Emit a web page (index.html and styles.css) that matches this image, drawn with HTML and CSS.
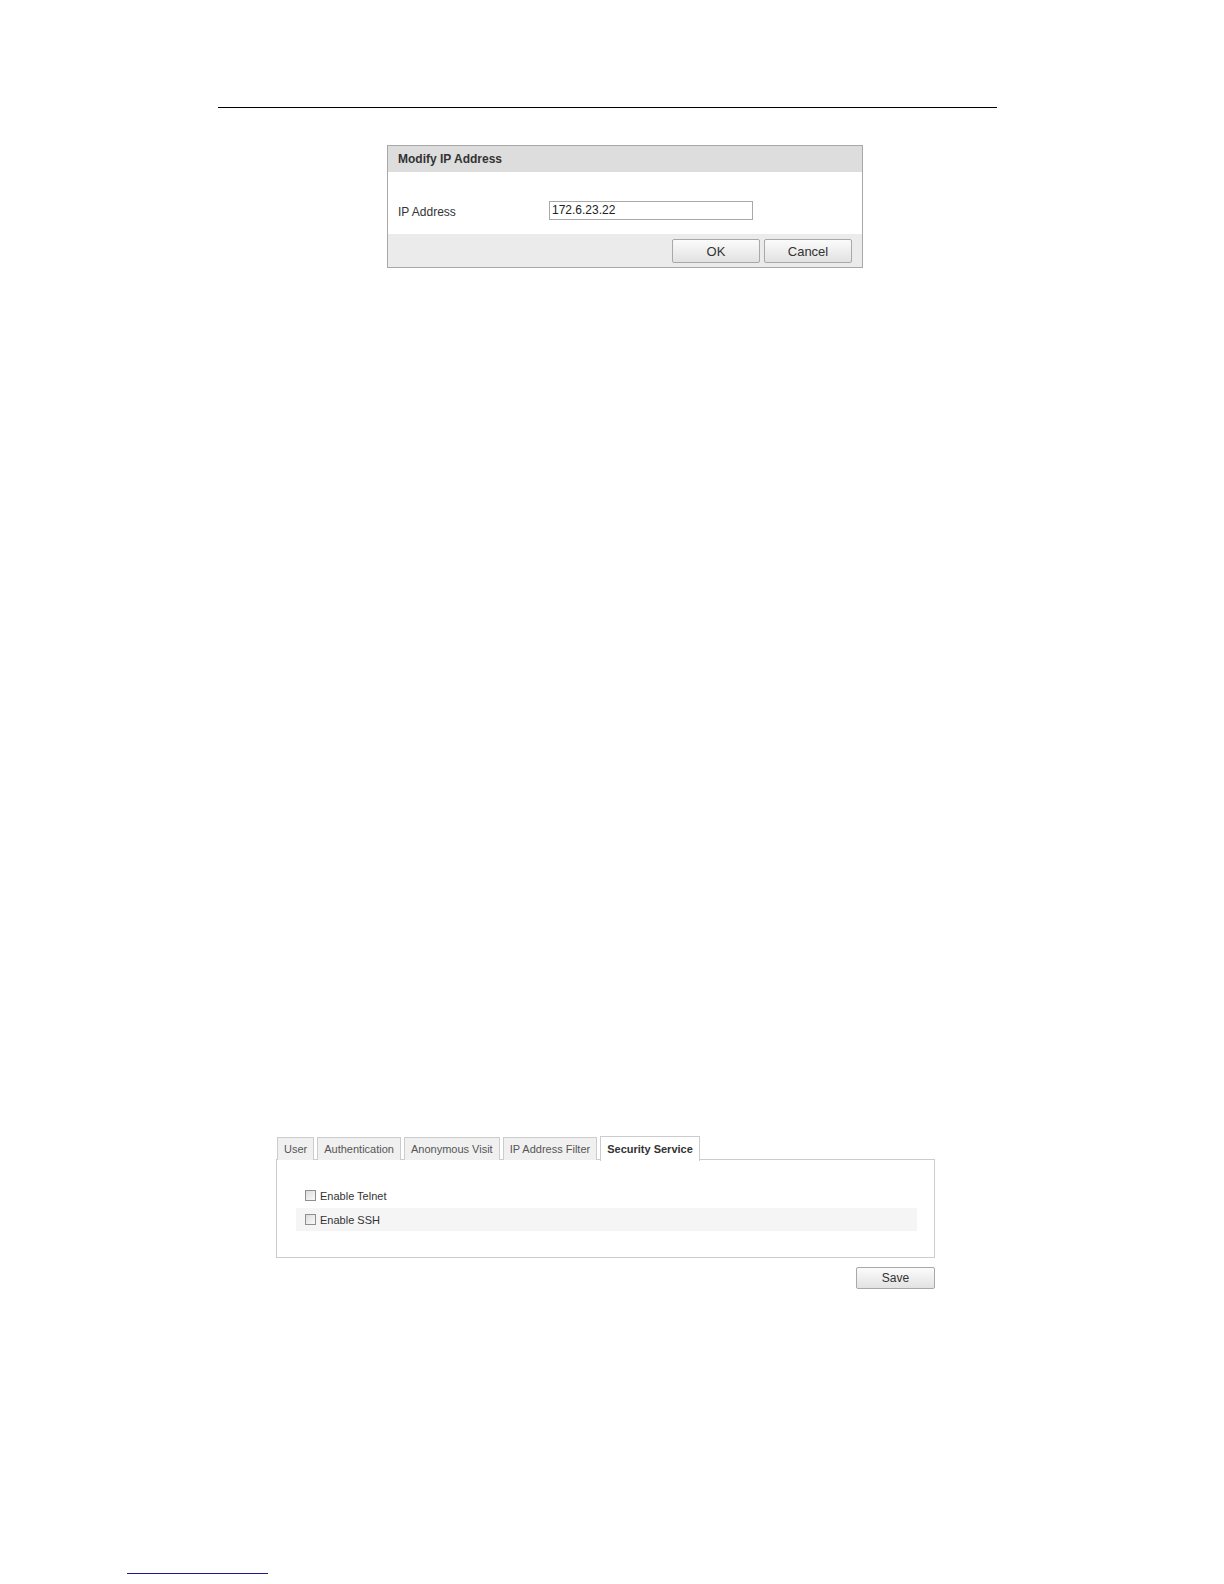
FILE: index.html
```html
<!DOCTYPE html>
<html>
<head>
<meta charset="utf-8">
<link rel="stylesheet" href="styles.css">
</head>
<body>
<div class="page">
  <div class="rule"></div>

  <div class="dialog">
    <div class="dlg-head">Modify IP Address</div>
    <div class="dlg-body">
      <span class="dlg-label">IP Address</span>
      <div class="dlg-input">172.6.23.22</div>
    </div>
    <div class="dlg-foot">
      <button class="btn btn-dlg">OK</button>
      <button class="btn btn-dlg">Cancel</button>
    </div>
  </div>

  <div class="tabs-wrap">
    <div class="tabs">
      <div class="tab">User</div>
      <div class="tab">Authentication</div>
      <div class="tab">Anonymous Visit</div>
      <div class="tab">IP Address Filter</div>
      <div class="tab active">Security Service</div>
    </div>
    <div class="panel">
      <div class="row"><span class="cb"></span><span class="cb-label">Enable Telnet</span></div>
      <div class="row alt"><span class="cb"></span><span class="cb-label">Enable SSH</span></div>
    </div>
    <div class="save-row">
      <button class="btn btn-save">Save</button>
    </div>
  </div>

  <div class="foot-rule"></div>
</div>
</body>
</html>
```

FILE: styles.css
```css
html, body {
  margin: 0;
  padding: 0;
  background: #ffffff;
  overflow: hidden;
}

.page {
  font-family: "Liberation Sans", Arial, sans-serif;
  color: #333333;
  padding-top: 107px;
}

.rule {
  margin-left: 218px;
  width: 779px;
  border-top: 1px solid #000000;
}

/* Dialog */
.dialog {
  margin-top: 37px;
  margin-left: 387px;
  width: 474px;
  border: 1px solid #a8a8a8;
}

.dlg-head {
  height: 26px;
  line-height: 26px;
  background: #dddddd;
  padding-left: 10px;
  font-size: 12px;
  font-weight: bold;
  color: #333333;
}

.dlg-body {
  height: 62px;
  box-sizing: border-box;
  padding: 29px 0 0 10px;
  display: flex;
  align-items: flex-start;
}

.dlg-label {
  width: 151px;
  font-size: 12px;
  line-height: 19px;
  padding-top: 2px;
  color: #333333;
}

.dlg-input {
  width: 200px;
  height: 17px;
  border: 1px solid #a9a9a9;
  font-size: 12px;
  line-height: 17px;
  padding-left: 2px;
  color: #222222;
}

.dlg-foot {
  height: 33px;
  background: #ebebeb;
  display: flex;
  justify-content: flex-end;
  align-items: flex-start;
  gap: 4px;
  padding: 5px 10px 0 0;
  box-sizing: border-box;
}

.btn {
  font-family: "Liberation Sans", Arial, sans-serif;
  background: linear-gradient(#fbfbfb, #e2e2e2);
  border: 1px solid #a8a8a8;
  border-radius: 2px;
  color: #333333;
  padding: 0;
  margin: 0;
  cursor: default;
}

.btn-dlg {
  width: 88px;
  height: 24px;
  font-size: 13px;
}

/* Tabs */
.tabs-wrap {
  margin-top: 868px;
  margin-left: 276px;
  width: 659px;
}

.tabs {
  display: flex;
  align-items: flex-end;
  gap: 3px;
  padding-left: 1px;
  height: 24px;
  position: relative;
  z-index: 1;
}

.tab {
  height: 22px;
  line-height: 22px;
  padding: 0 6px;
  font-size: 11px;
  color: #555555;
  background: #f0f0f0;
  border: 1px solid #cccccc;
  border-bottom: none;
}

.tab.active {
  height: 24px;
  line-height: 24px;
  background: #ffffff;
  font-weight: bold;
  color: #333333;
  margin-bottom: -1px;
}

.panel {
  border: 1px solid #cccccc;
  height: 73px;
  padding: 24px 17px 0 19px;
  display: flex;
  flex-direction: column;
  gap: 1px;
  margin-top: -1px;
}

.row {
  height: 23px;
  display: flex;
  align-items: center;
  padding-left: 9px;
}

.row.alt {
  background: #f5f5f5;
}

.cb {
  width: 9px;
  height: 9px;
  border: 1px solid #8f8f8f;
  background: linear-gradient(135deg, #dcdcdc, #fafafa);
  margin-right: 4px;
}

.cb-label {
  font-size: 11px;
  color: #333333;
}

.save-row {
  display: flex;
  justify-content: flex-end;
  margin-top: 9px;
}

.btn-save {
  width: 79px;
  height: 22px;
  font-size: 12px;
}

.foot-rule {
  margin-top: 284px;
  margin-left: 127px;
  width: 141px;
  border-top: 1px solid #1a1a8c;
}
```
